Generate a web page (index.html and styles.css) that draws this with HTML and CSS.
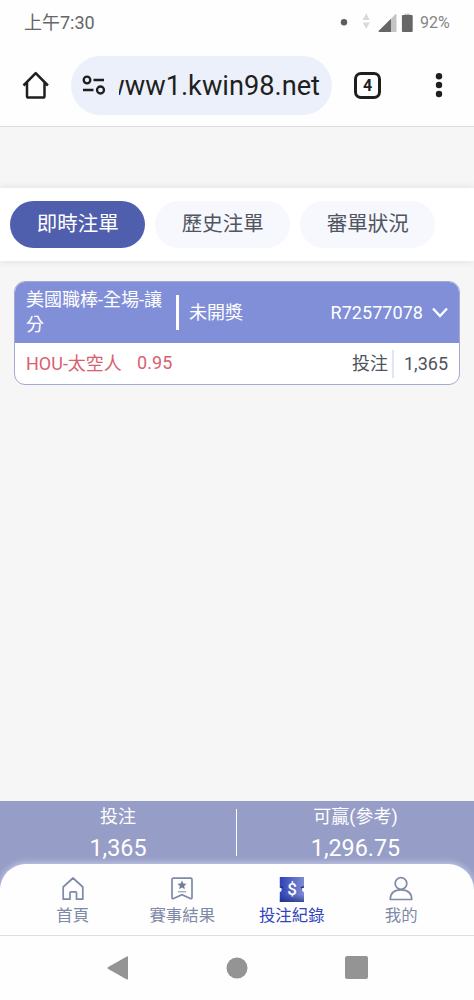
FILE: index.html
```
<!DOCTYPE html>
<html lang="zh-Hant">
<head>
<meta charset="utf-8">
<title>投注紀錄</title>
<link rel="stylesheet" href="styles.css">
</head>
<body>
<div class="screen">
  <header class="status">
    <span class="time">上午7:30</span>
    <svg class="status-icons" width="76" height="22" viewBox="0 0 76 22">
      <circle cx="5" cy="11.3" r="3.2" fill="#5c5c5c"/>
      <path d="M23.7 9 27.2 2.2 30.7 9zM23.7 11.500h7L27.2 18z" fill="#d9d9d9"/>
      <path d="M56 3.500a1 1 0 0 1 1.500 0V21H40z" fill="#c4c4c4"/>
      <path d="M52 7.800V21H40.200q-1.400-.4-.2-1.600z" fill="#666"/>
      <path d="M65.500 2.700h5.500v2h-5.500z" fill="#c4c4c4"/>
      <rect x="62.900" y="4" width="10.800" height="17" rx="1" fill="#666"/>
    </svg>
    <span class="battery">92%</span>
  </header>
  <div class="browser">
    <svg class="home" width="28" height="30" viewBox="0 0 28 30" fill="none" stroke="#1f1f1f" stroke-width="2.500" stroke-linejoin="round"><path d="M1.500 15.500 13.700 3.200l12.200 12.300M5 12.500V26q0 1.600 1.600 1.600h14.300q1.600 0 1.600-1.600V12.500"/></svg>
    <div class="address">
      <svg width="24" height="22" viewBox="0 0 24 22" fill="none" stroke="#1f1f1f" stroke-width="2.300"><circle cx="5" cy="6" r="3.300"/><path d="M11.500 6H22M1 16h10.500"/><circle cx="18.500" cy="16" r="3.500"/></svg>
      <div class="url"><span>www1.kwin98.net</span></div>
    </div>
    <div class="tab-count">4</div>
    <svg class="more" width="8" height="28" viewBox="0 0 8 28" fill="#1f1f1f"><circle cx="4" cy="5.200" r="3.200"/><circle cx="4" cy="14" r="3.200"/><circle cx="4" cy="23" r="3.200"/></svg>
  </div>
  <main class="page">
    <nav class="tabs">
      <div class="tab active">即時注單</div>
      <div class="tab">歷史注單</div>
      <div class="tab">審單狀況</div>
    </nav>
    <section class="card">
      <div class="card-head">
        <div class="league">美國職棒-全場-讓分</div>
        <div class="bar"></div>
        <div class="state">未開獎</div>
        <div class="ticket">R72577078</div>
        <svg width="16" height="11" viewBox="0 0 16 11" fill="none" stroke="#fff" stroke-width="2.300"><path d="m1 1.500 7 7.500 7-7.500"/></svg>
      </div>
      <div class="card-body">
        <span class="pick">HOU-太空人</span>
        <span class="odds">0.95</span>
        <span class="stake-label">投注</span>
        <span class="stake">1,365</span>
      </div>
    </section>
  </main>
  <footer class="dock">
    <div class="totals">
      <div class="total"><span class="label">投注</span><span class="value">1,365</span></div>
      <div class="split"></div>
      <div class="total"><span class="label">可贏(參考)</span><span class="value">1,296.75</span></div>
    </div>
    <nav class="menu">
      <div class="item">
        <svg width="26" height="26" viewBox="0 0 26 26" fill="none" stroke="#7f8aa8" stroke-width="1.700" stroke-linejoin="round"><path d="M3.200 11 13 2l9.800 9v12.200h-6.300v-6.500q0-.9-.9-.9h-4.700q-.9 0-.9.900v6.500H3.200z"/></svg>
        <span>首頁</span>
      </div>
      <div class="item">
        <svg width="26" height="26" viewBox="0 0 26 26"><path d="M3 3.500q0-1.300 1.300-1.300h17.400q1.300 0 1.300 1.300v18q0 1.800-1.600 1L13 18.700l-8.400 3.800q-1.600.8-1.600-1z" fill="none" stroke="#7f8aa8" stroke-width="1.700"/><path d="m13 4.600 1.300 2.800 3.200.4-2.300 2.200.6 3.200-2.800-1.600-2.800 1.600.6-3.200-2.300-2.200 3.200-.4z" fill="#727d9d"/><path d="M9 15.800h8" stroke="#7f8aa8"/></svg>
        <span>賽事結果</span>
      </div>
      <div class="item current">
        <svg width="26" height="26" viewBox="0 0 26 26">
          <defs><linearGradient id="ticket"><stop stop-color="#2c43b8"/><stop offset="1" stop-color="#7f8bd4"/></linearGradient><linearGradient id="fold" x1="0" y1="0" x2="0" y2="1"><stop offset=".7" stop-color="#15256f" stop-opacity="0"/><stop offset="1" stop-color="#15256f" stop-opacity=".6"/></linearGradient></defs>
          <path d="M.8 1H25v9.700a3 3 0 0 0 0 5.600V26H.8v-9.700a3 3 0 0 0 0-5.600z" fill="url(#ticket)"/>
          <path d="M.8 1H25v9.700a3 3 0 0 0 0 5.600V26H.8v-9.700a3 3 0 0 0 0-5.600z" fill="url(#fold)"/>
          <path d="M.8 11Q3 10.800 3.700 12.200M25 11q-2.200-.2-2.900 1.200" fill="none" stroke="#20306e" stroke-width="1.500"/>
          <text x="13" y="18.700" class="dollar">$</text>
        </svg>
        <span>投注紀錄</span>
      </div>
      <div class="item">
        <svg width="26" height="26" viewBox="0 0 26 26" fill="none" stroke="#7f8aa8" stroke-width="1.700" stroke-linejoin="round"><circle cx="13" cy="7.500" r="5.800"/><path d="M2.300 23.500q0-9.700 10.700-9.700t10.700 9.700z"/></svg>
        <span>我的</span>
      </div>
    </nav>
  </footer>
  <div class="system">
    <svg width="22" height="24" viewBox="0 0 22 24" fill="#949494"><path d="M.8 12.700Q0 12 .8 11.300L19.800.5q1.200-.5 1.200.8v21.500q0 1.200-1.200.6z"/></svg>
    <svg width="22" height="22" viewBox="0 0 22 22" fill="#949494"><circle cx="11" cy="11" r="10.500"/></svg>
    <svg width="23" height="23" viewBox="0 0 23 23" fill="#949494"><rect width="23" height="23" rx="2"/></svg>
  </div>
</div>
</body>
</html>
```
FILE: styles.css
```
* { box-sizing: border-box; }
body {
  margin: 0;
  background: #fefefe;
  font-family: Roboto, "Noto Sans CJK TC", sans-serif;
}
svg { display: block; flex: none; }
.screen {
  width: 474px;
  height: 1000px;
  display: flex;
  flex-direction: column;
  overflow: hidden;
}
.status {
  height: 44px;
  display: flex;
  align-items: center;
  padding: 0 21px 0 24px;
  color: #666;
}
.time { flex: 1; padding-bottom: 3px; font-size: 18px; }
.status-icons { margin-top: -1px; }
.battery { width: 38px; padding-left: 5px; font-size: 16px; color: #858585; }
.browser {
  height: 83px;
  display: flex;
  align-items: center;
  padding: 0 31px 0 22px;
  border-bottom: 1px solid #dedede;
}
.address {
  width: 261px;
  height: 59px;
  margin-left: 21px;
  padding-left: 11px;
  border-radius: 30px;
  background: #ebf0fa;
  display: flex;
  align-items: center;
}
.url {
  width: 201px;
  margin-left: 13px;
  padding-top: 2px;
  overflow: hidden;
  display: flex;
  justify-content: flex-end;
  font-size: 27.200px;
  line-height: 36px;
  color: #1f1f1f;
  white-space: nowrap;
}
.tab-count {
  width: 27px;
  height: 27px;
  margin-left: 22px;
  border: 3px solid #1f1f1f;
  border-radius: 7px;
  display: flex;
  align-items: center;
  justify-content: center;
  font-size: 16px;
  font-weight: 700;
  color: #1f1f1f;
}
.more { margin-left: auto; }
.page {
  flex: 1;
  padding-top: 61px;
  background: #f6f6f6;
}
.tabs {
  height: 73px;
  display: flex;
  align-items: center;
  gap: 10.300px;
  padding: 0 10.400px;
  background: #fff;
  box-shadow: 0 0 8px rgba(0, 0, 0, .1);
}
.tab {
  width: 134.700px;
  height: 47px;
  border-radius: 24px;
  background: #f6f8fd;
  color: #50555f;
  font-size: 20.500px;
  line-height: 47px;
  text-align: center;
}
.active { background: #505eae; color: #fff; }
.card {
  width: 446px;
  height: 104px;
  margin: 20px 14px 0;
  border: 1.500px solid #a2a9d3;
  border-radius: 11px;
  background: #fff;
  overflow: hidden;
  font-size: 18px;
}
.card-head {
  height: 61px;
  display: flex;
  align-items: center;
  padding: 0 11px;
  background: #818fd8;
  color: #fff;
}
.league { width: 142px; padding-bottom: 2px; line-height: 25px; }
.bar { width: 3px; height: 35px; margin: 0 10px 0 8px; background: #fff; }
.state { padding-bottom: 3px; }
.ticket { margin: 0 9px 1px auto; letter-spacing: .05px; }
.card-body {
  height: 41px;
  display: flex;
  align-items: center;
  padding: 0 11px;
  color: #4e535d;
}
.pick, .odds { color: #d8616f; }
.pick, .stake-label { padding-bottom: 4px; }
.odds { margin-left: 15px; padding-bottom: 2px; letter-spacing: .15px; }
.stake-label { margin-left: auto; }
.stake {
  margin-left: 4px;
  padding: 0 0 1px 10px;
  border-left: 2px solid #e0e5f5;
  line-height: 27px;
}
.dock { height: 134px; background: #969dc6; }
.totals {
  height: 63px;
  display: flex;
  color: #fff;
}
.total {
  width: 236px;
  display: flex;
  flex-direction: column;
  align-items: center;
}
.total:last-child { width: 237px; }
.label { font-size: 18px; line-height: 31px; }
.value { font-size: 23.300px; line-height: 32px; }
.split { width: 1px; height: 47px; margin-top: 8px; background: #fff; }
.menu {
  height: 71px;
  padding: 12px 18px 0;
  display: flex;
  border-radius: 26px 26px 0 0;
  background: #fefefe;
  box-shadow: 0 -1px 7px rgba(228, 233, 255, .65);
}
.item {
  flex: 1;
  display: flex;
  flex-direction: column;
  align-items: center;
  color: #7f8aa8;
  font-size: 16.400px;
  line-height: 28px;
}
.current { color: #3144bb; }
.dollar { font: 500 17px Roboto, sans-serif; fill: #fff; text-anchor: middle; }
.system {
  height: 65px;
  display: flex;
  align-items: center;
  justify-content: center;
  gap: 97px;
  padding-bottom: 1px;
  border-top: 1px solid #dedede;
  background: #fefefe;
}
```
